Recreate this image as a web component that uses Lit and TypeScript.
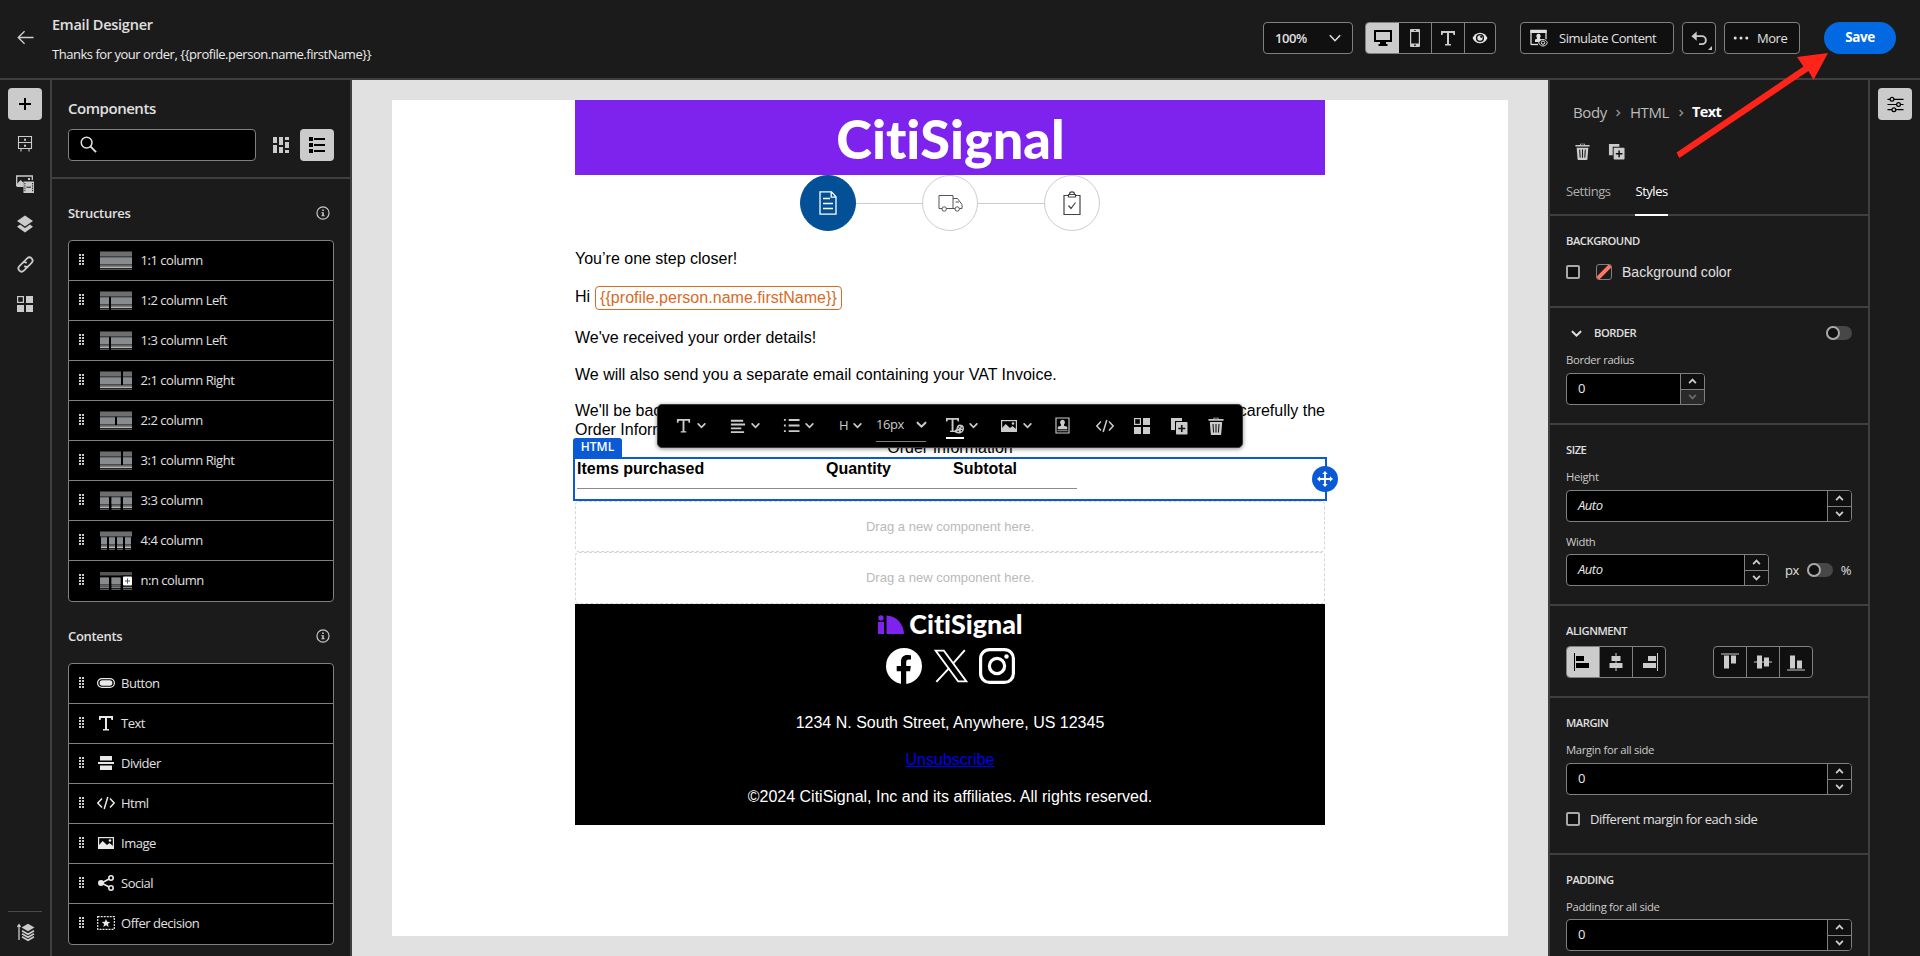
import { LitElement, html, css, svg, nothing } from "lit";
import { customElement, property } from "lit/decorators.js";
import { classMap } from "lit/directives/class-map.js";

/* ---------- icon set ---------- */
const ICONS: Record<string, any> = {
  back: svg`<path d="M17.5 9H1.5M8 2.3 1.3 9 8 15.7" fill="none" stroke="currentColor" stroke-width="1.4"/>`,
  plus: svg`<path d="M9 3v12M3 9h12" stroke="currentColor" stroke-width="2" fill="none"/>`,
  cabinet: svg`<path d="M2.5 1.500h13v12h-13zM2.500 7.500h13M5 13.500v3M13 13.500v3" fill="none" stroke="currentColor" stroke-width="1.100"/><path d="M8 3.800h2v2H8zM8 9.700h2v2H8z" fill="currentColor"/>`,
  media: svg`<path d="M.7 11V1h15.6v4" fill="none" stroke="currentColor" stroke-width="1.3"/><path d="M.7 12V9l4-4 3 3v4zM12 3h2v2h-2z" fill="currentColor"/><path d="M7.500 6.500h10.500v11.500H7.500z" fill="currentColor"/><path d="M8.900 8v9M16.600 8v9" stroke="#1b1b1b" stroke-width="1" stroke-dasharray="1.3 1"/><path d="M10.500 12.200h4.500" stroke="#1b1b1b" stroke-width="1"/>`,
  layers: svg`<path d="M9 .5 17 6l-8 5.5L1 6z" fill="currentColor"/><path d="M4 9.5 1 11.8 9 17.5l8-5.7-3-2.3-5 3.6z" fill="currentColor"/>`,
  link: svg`<g fill="none" stroke="currentColor" stroke-width="1.6" transform="rotate(-45 9 9)"><path d="M9.500 12H3.800a3 3 0 0 1 0-6h4a3 3 0 0 1 3 2.800"/><path d="M8.500 6h5.700a3 3 0 0 1 0 6h-4a3 3 0 0 1-3-2.800"/></g>`,
  blocks: svg`<rect x="1.600" y="1.600" width="5.800" height="5.800" fill="none" stroke="currentColor" stroke-width="1.200"/><path d="M10 1h7v7h-7zM1 10h7v7H1zM10 10h7v7h-7z" fill="currentColor"/>`,
  order: svg`<path d="M2 17V2M.4 3.8 2 1.6l1.600 2.200" fill="none" stroke="currentColor" stroke-width="1.300"/><path d="M11 .8 17.500 4.500 11 8.300 4.500 4.500z" fill="currentColor"/><path d="M5 7.700l6 3.500 6-3.500M5 10.700l6 3.500 6-3.500M5 13.700l6 3.500 6-3.500" fill="none" stroke="currentColor" stroke-width="1.700"/>`,
  search: svg`<circle cx="7" cy="7" r="5.700" fill="none" stroke="currentColor" stroke-width="1.600"/><path d="M11 11l6 6" stroke="currentColor" stroke-width="2"/>`,
  mosaic: svg`<path d="M1 1h4v6H1zM1 9h4v8H1zM7 1h4v8H7zM7 11h4v6H7zM13 1h4v3h-4zM13 6h4v6h-4zM13 14h4v3h-4z" fill="currentColor"/>`,
  listview: svg`<path d="M1 1h4v4H1zM1 7h4v4H1zM1 13h4v4H1zM6 2h11v2H6zM6 8h11v2H6zM6 14h11v2H6z" fill="currentColor"/>`,
  info: svg`<circle cx="9" cy="9" r="7.800" fill="none" stroke="currentColor" stroke-width="1.500"/><path d="M8 4.500h2v2H8zM7 8h3v4h1v1.300H7V12h1V9.300H7z" fill="currentColor"/>`,
  button: svg`<rect x=".6" y="4.600" width="16.800" height="8.800" rx="4.400" fill="none" stroke="currentColor" stroke-width="1.200"/><rect x="2.600" y="6.300" width="12.800" height="5.400" rx="2.700" fill="currentColor"/>`,
  text: svg`<path d="M2 2h14v4h-1.500l-.6-2H10v11h2v1.500H6V15h2V4H4.100l-.6 2H2z" fill="currentColor"/>`,
  divider: svg`<path d="M1 8h16v2H1zM3 2.500Q3 2 3.500 2h11q.5 0 .5.500V6.500H3zM3 11.500h12v4q0 .500-.5.500h-11q-.5 0-.5-.500z" fill="currentColor"/>`,
  code: svg`<path d="M5 4.500.8 9 5 13.500M13 4.500 17.200 9 13 13.500M10.800 3 7.200 15" fill="none" stroke="currentColor" stroke-width="1.500"/>`,
  image: svg`<rect x="1.600" y="3.600" width="14.800" height="10.800" fill="none" stroke="currentColor" stroke-width="1.200"/><path d="M2 14.500V11l3.700-4L10 11l2.500-2L16 12v2.500z" fill="currentColor"/><circle cx="13" cy="6.500" r="1.300" fill="currentColor"/>`,
  share: svg`<path d="M13 4.500 4.500 9l8.500 4.500" fill="none" stroke="currentColor" stroke-width="1.600"/><circle cx="4" cy="9" r="3" fill="currentColor"/><circle cx="14" cy="4" r="2.200" fill="#000" stroke="currentColor" stroke-width="1.600"/><circle cx="14" cy="14" r="2.200" fill="#000" stroke="currentColor" stroke-width="1.600"/>`,
  offer: svg`<rect x=".7" y="2.700" width="16.600" height="12.600" fill="none" stroke="currentColor" stroke-width="1.200" stroke-dasharray="2 1"/><path d="M9 5l1.200 2.800 3 .2-2.300 1.900.8 3L9 11.300l-2.700 1.600.8-3L4.800 8l3-.2z" fill="currentColor"/>`,
  chev: svg`<path d="M3.500 6.500 9 12l5.500-5.500" fill="none" stroke="currentColor" stroke-width="2.800" stroke-linecap="round"/>`,
  chevthin: svg`<path d="M3 6 9 12.500 15 6" fill="none" stroke="currentColor" stroke-width="2" stroke-linecap="round"/>`,
  chevup: svg`<path d="M3.500 11.500 9 6l5.500 5.500" fill="none" stroke="currentColor" stroke-width="3"/>`,
  chevdn: svg`<path d="M3.500 6.500 9 12l5.500-5.500" fill="none" stroke="currentColor" stroke-width="3"/>`,
  crumb: svg`<path d="M6.500 3.500 12 9l-5.500 5.500" fill="none" stroke="currentColor" stroke-width="2.600"/>`,
  desktop: svg`<path d="M0 1h18v12h-6v2h1.500v2h-9v-2H6v-2H0zM2 3v8h14V3z" fill="currentColor" fill-rule="evenodd"/>`,
  phone: svg`<path d="M5 0h8q1 0 1 1v16q0 1-1 1H5q-1 0-1-1V1q0-1 1-1zM5.200 3v11.500h7.600V3z" fill="currentColor" fill-rule="evenodd"/><path d="M8 1.200h2v.8H8zM8.200 15.600h1.600v1.400H8.200z" fill="#111"/>`,
  eye: svg`<path d="M9 3C5 3 2.200 5.500.6 9 2.200 12.500 5 15 9 15s6.800-2.500 8.400-6C15.800 5.500 13 3 9 3z" fill="currentColor"/><circle cx="9" cy="9" r="4.600" fill="#111"/><circle cx="9" cy="9" r="3" fill="currentColor"/><circle cx="10.300" cy="7.700" r="1.200" fill="#111"/>`,
  simulate: svg`<path d="M1 15.700V1.300h15v9" fill="none" stroke="currentColor" stroke-width="1.300"/><path d="M.4 1h16.200v3H.4z" fill="currentColor"/><path d="M1 15.500h7" stroke="currentColor" stroke-width="1.300"/><path d="M8.500 4.800a2.100 2.300 0 0 1 1.500 4v1l2 .8V13H5v-2.400l2-.8v-1a2.100 2.300 0 0 1 1.500-4z" fill="currentColor"/><path d="M13 10.500c-2 0-3.600 1.300-4.300 3.200.7 2 2.300 3.300 4.300 3.300s3.600-1.300 4.300-3.300c-.7-1.900-2.300-3.200-4.300-3.200z" fill="#111" stroke="currentColor"/><circle cx="13" cy="13.700" r="1.700" fill="none" stroke="currentColor"/>`,
  undo: svg`<path d="M2 6.500h9.500a4 4 0 0 1 0 8.500H8.500" fill="none" stroke="currentColor" stroke-width="2"/><path d="M6 1.500v10L.5 6.500z" fill="currentColor"/>`,
  dots: svg`<circle cx="2.500" cy="9" r="1.700" fill="currentColor"/><circle cx="9" cy="9" r="1.700" fill="currentColor"/><circle cx="15.500" cy="9" r="1.700" fill="currentColor"/>`,
  trash: svg`<path d="M6.500 2.500V.7h5v1.800M1.500 2h15v1.800h-15zM2.800 5h12.400l-1 12.200q0 .800-.8.800H4.600q-.8 0-.8-.800z" fill="currentColor"/><path d="M7.300 1.400h3.400v.8H7.300z" fill="#111"/><path d="M6 7l.6 8.500M9 7v8.500M12 7l-.6 8.500" stroke="#1b1b1b" stroke-width="1.100"/>`,
  dup: svg`<path d="M1 1h11v3H5v9H1z" fill="currentColor"/><rect x="6" y="5" width="11.500" height="12.500" rx=".8" fill="currentColor"/><path d="M11.750 8v7M8.300 11.500h7" stroke="#111" stroke-width="1.600"/>`,
  sliders: svg`<g fill="none" stroke="currentColor" stroke-width="1.300"><path d="M.5 3.500h2.800M7.300 3.500h10.200M.5 9h9.700M14.200 9h3.300M.5 14.500h4.800M9.300 14.500h8.200"/><circle cx="5.300" cy="3.500" r="2"/><circle cx="12.200" cy="9" r="2"/><circle cx="7.300" cy="14.500" r="2"/></g>`,
  alignleft: svg`<path d="M2 3h13v2H2zM2 7h15v2H2zM2 11h11v2H2zM2 15h14v2H2z" fill="currentColor"/>`,
  bullets: svg`<path d="M1 2h2v2H1zM1 8h2v2H1zM1 14h2v2H1zM6 2.200h11.500v2H6zM6 8h11.500v2H6zM6 14h11.500v2H6z" fill="currentColor"/>`,
  textcolor: svg`<path d="M0 1h13v3.500h-1.300L11 2.700H7.500v11h1.700V15H4v-1.300h1.600v-11H2L1.300 4.500H0z" fill="currentColor"/><path d="M13.500 7.500c3 0 4.500 1.500 4.500 4s-2 5-5 5-4.500-1-4.500-2.500 2-1 2-2.500 1-4 3-4z" fill="currentColor"/><path d="M13 9.200h1.300v1.300H13zM15.300 10.500h1.300v1.300h-1.300zM14.800 13h1.300v1.300h-1.300zM11.500 13.800h1.300v1.300h-1.300zM11.800 10.800h1v1h-1z" fill="#000"/>`,
  profile: svg`<path d="M1.500.5h15v17h-15zM2.700 1.700v14.600h12.600V1.700z" fill="currentColor" fill-rule="evenodd"/><path d="M9 3a2.600 2.800 0 0 1 1.600 5v1.200l3.400 1V13H4v-2.800l3.400-1V8A2.600 2.800 0 0 1 9 3z" fill="currentColor"/><path d="M3.500 14.200h11v.8h-11z" fill="currentColor"/>`,
  hl: svg`<path d="M.5 0v18" stroke="currentColor" stroke-width="1"/><path d="M2 3h8v5H2zM2 10h13v5H2z" fill="currentColor"/>`,
  hc: svg`<path d="M9 0v18" stroke="currentColor" stroke-width="1"/><path d="M4.500 3h9v5h-9zM2.500 10h13v5h-13z" fill="currentColor"/>`,
  hr: svg`<path d="M17.500 0v18" stroke="currentColor" stroke-width="1"/><path d="M8 3h8v5H8zM3 10h13v5H3z" fill="currentColor"/>`,
  vt: svg`<path d="M0 1h18" stroke="currentColor" stroke-width="1"/><path d="M3 2.500h5v13H3zM10 2.500h5v8h-5z" fill="currentColor"/>`,
  vm: svg`<path d="M0 9h18" stroke="currentColor" stroke-width="1"/><path d="M3 2.500h5v13H3zM10 4.500h5v9h-5z" fill="currentColor"/>`,
  vb: svg`<path d="M0 17h18" stroke="currentColor" stroke-width="1"/><path d="M3 2.500h5v13H3zM10 7.500h5v8h-5z" fill="currentColor"/>`,
  move: svg`<path d="M9 2v14M2 9h14" stroke="currentColor" stroke-width="2"/><path d="M9 0l3 3.500H6zM9 18l3-3.500H6zM0 9l3.500-3v6zM18 9l-3.500-3v6z" fill="currentColor"/>`,
};

@customElement("ui-icon")
class UiIcon extends LitElement {
  @property() name = "";
  @property({ type: Number }) size = 18;
  static styles = css`
    :host { display: inline-flex; flex: none; }
    svg { display: block; overflow: visible; }
  `;
  render() {
    return html`<svg width=${this.size} height=${this.size} viewBox="0 0 18 18">${ICONS[this.name] ?? nothing}</svg>`;
  }
}

const base = css`
  *, :host { box-sizing: border-box; }
  :host {
    font-family: "Open Sans", "Noto Sans", sans-serif;
    font-size: 13px;
    letter-spacing: -0.036em;
    color: #e0e0e0;
    white-space: nowrap;
  }
`;

/* ---------- top bar ---------- */
@customElement("top-bar")
class TopBar extends LitElement {
  static styles = [base, css`
    :host { display: flex; height: 80px; background: #1b1b1b; border-bottom: 2px solid #3f3f3f; padding: 0 24px 0 17px; }
    .back { align-self: center; margin-top: -3px; color: #cfcfcf; }
    .names { margin-left: 18px; flex: 1; }
    h1 { margin: 14px 0 0; font-size: 14.500px; line-height: 22px; font-weight: 600; letter-spacing: -0.240px; }
    p { margin: 8px 0 0; line-height: 20px; color: #ebebeb; letter-spacing: -0.470px; }
    .tools { display: flex; height: 32px; margin-top: 22px; }
    .box { display: flex; align-items: center; border: 1px solid #808080; border-radius: 4px; background: #101010; }
    .zoom { width: 90px; padding: 0 10px 0 11px; justify-content: space-between; font-weight: 600; }
    .views { margin-left: 12px; overflow: hidden; }
    .view { height: 100%; display: flex; align-items: center; justify-content: center; border-left: 1px solid #808080; color: #cbcbcb; }
    .view:first-child { border: 0; background: #cbcbcb; color: #000; }
    .v0 { width: 33px; } .v1 { width: 32px; border: 0; } .v2 { width: 33px; } .v3 { width: 31px; color: #e6e6e6; }
    .sim { width: 154px; margin-left: 24px; padding-left: 9px; gap: 11px; }
    .undo { width: 34px; margin-left: 8px; position: relative; padding-left: 8px; color: #cbcbcb; }
    .undo i { position: absolute; right: 3px; bottom: 3px; border: 2.500px solid #cbcbcb; border-top-color: transparent; border-left-color: transparent; }
    .more { width: 76px; margin-left: 8px; padding-left: 8px; gap: 8px; }
    .save { width: 72px; margin-left: 24px; border-radius: 16px; background: #0269e3; color: #fff; font-size: 13.500px; font-weight: 700; display: flex; align-items: center; justify-content: center; padding-bottom: 2px; }
  `];
  render() {
    return html`
      <ui-icon class="back" name="back" size="17"></ui-icon>
      <div class="names">
        <h1>Email Designer</h1>
        <p>Thanks for your order, {{profile.person.name.firstName}}</p>
      </div>
      <div class="tools">
        <div class="box zoom"><span>100%</span><ui-icon name="chevthin" size="14"></ui-icon></div>
        <div class="box views">
          ${["desktop", "phone", "text", "eye"].map((n, i) => html`<div class="view v${i}"><ui-icon name=${n} size=${i === 3 ? 16 : 18}></ui-icon></div>`)}
        </div>
        <div class="box sim"><ui-icon name="simulate"></ui-icon>Simulate Content</div>
        <div class="box undo"><ui-icon name="undo" size="17"></ui-icon><i></i></div>
        <div class="box more"><ui-icon name="dots" size="16"></ui-icon>More</div>
        <div class="save">Save</div>
      </div>`;
  }
}

/* ---------- left rail ---------- */
@customElement("left-rail")
class LeftRail extends LitElement {
  static styles = css`
    *, :host { box-sizing: border-box; }
    :host { width: 52px; border-right: 2px solid #3f3f3f; display: flex; flex-direction: column; align-items: center; padding-top: 8px; color: #cbcbcb; }
    .btn { width: 34px; height: 32px; margin-bottom: 8px; display: flex; align-items: center; justify-content: center; border-radius: 4px; flex: none; }
    .on { background: #cbcbcb; color: #000; }
    .foot { margin-top: auto; width: 34px; height: 45px; border-top: 1px solid #4a4a4a; display: flex; justify-content: center; padding: 11px 0 0 1px; }
  `;
  render() {
    return html`
      <div class="btn on"><ui-icon name="plus"></ui-icon></div>
      ${["cabinet", "media", "layers", "link", "blocks"].map((n) => html`<div class="btn"><ui-icon name=${n} size=${n === "link" ? 19 : 18}></ui-icon></div>`)}
      <div class="foot"><ui-icon name="order" size="18"></ui-icon></div>`;
  }
}

/* ---------- components panel ---------- */
type Col = [number, number];
const STRUCTURES: { label: string; cols: Col[]; full?: boolean; nn?: boolean }[] = [
  { label: "1:1 column", cols: [[0, 32]] },
  { label: "1:2 column Left", cols: [[0, 9], [11, 21]] },
  { label: "1:3 column Left", cols: [[0, 9], [11, 21]] },
  { label: "2:1 column Right", cols: [[0, 21], [23, 9]], full: true },
  { label: "2:2 column", cols: [[0, 15], [17, 15]], full: true },
  { label: "3:1 column Right", cols: [[0, 21], [23, 9]], full: true },
  { label: "3:3 column", cols: [[0, 9], [11.500, 9], [23, 9]] },
  { label: "4:4 column", cols: [[1, 6], [9, 6], [17, 6], [25, 6]] },
  { label: "n:n column", cols: [[0, 9], [11.500, 9], [23, 9]], nn: true },
];
const CONTENTS: [string, string][] = [
  ["button", "Button"], ["text", "Text"], ["divider", "Divider"], ["code", "Html"],
  ["image", "Image"], ["share", "Social"], ["offer", "Offer decision"],
];

@customElement("components-panel")
class ComponentsPanel extends LitElement {
  static styles = [base, css`
    :host { width: 300px; border-right: 2px solid #3f3f3f; overflow: hidden; display: flex; flex-direction: column; }
    .head { height: 99px; border-bottom: 2px solid #3f3f3f; padding: 17px 16px 0; flex: none; }
    h2 { margin: 0; font-size: 15px; line-height: 22px; font-weight: 600; }
    .row { display: flex; margin-top: 10px; align-items: center; }
    .search { width: 188px; height: 32px; border: 1px solid #808080; border-radius: 4px; background: #000; padding: 6px 0 0 11px; }
    .mosaic { margin-left: 16px; color: #cbcbcb; }
    .list { margin-left: 10px; width: 34px; height: 32px; border-radius: 4px; background: #cbcbcb; color: #000; display: flex; align-items: center; justify-content: center; }
    .sec { padding: 0 16px; }
    .title { display: flex; justify-content: space-between; align-items: center; padding-right: 4px; height: 20px; font-weight: 600; letter-spacing: -0.300px; }
    .title ui-icon { color: #cbcbcb; }
    .s1 { margin-top: 24px; } .s2 { margin-top: 24px; }
    .box { margin-top: 17px; border: 1px solid #808080; border-radius: 4px; background: #000; overflow: hidden; }
    .item { height: 40px; display: flex; align-items: center; padding: 0 0 1px 10px; border-bottom: 1px solid #808080; }
    .item:last-child { border: 0; padding-bottom: 2px; }
    .grip { width: 6px; height: 12px; flex: none; margin-top: -1px; }
    .thumb { margin: 0 8.500px 0 15px; flex: none; }
    .item ui-icon { margin: 0 6px 0 12px; color: #e8e8e8; }
  `];
  grip() {
    return html`<svg class="grip" viewBox="0 0 6 12">${[0, 3, 6, 9].map((y) => svg`<path d="M0 ${y}h2v2H0zM3 ${y}h2v2H3z" fill="#cbcbcb"/>`)}</svg>`;
  }
  thumb(s: (typeof STRUCTURES)[0]) {
    const top = s.nn ? 2 : 0;
    return html`<svg class="thumb" width="32" height="19" viewBox="0 0 32 19">
      ${s.nn
        ? svg`<path d="M0 1.500h32v1H0z" fill="#aaa"/><path d="M0 2.500h32v2H0z" fill="#555"/>`
        : svg`<path d="M0 .5h32v5H0z" fill="#6e6e6e"/>`}
      ${s.cols.map(([x, w]) => svg`<path d="M${x} ${5.500 + top / 2}h${w}v8.500h-${w}z" fill="#4a4c4d"/><path d="M${x} 6.500h${w}v6.500h-${w}z" fill="#888c8f"/>`)}
      ${(s.full ? [[0, 32] as Col] : s.cols).map(([x, w]) => svg`<path d="M${x} 14h${w}v1h-${w}z" fill="#666"/><path d="M${x} 15.500h${w}v1.200h-${w}z" fill=${s.nn ? "#aaa" : "#fff"}/><path d="M${x} 17.700h${w}v1h-${w}z" fill="#777"/>`)}
      ${s.label.endsWith("Right") ? svg`<path d="M21 0h2v13.500h-2z" fill="#000"/>` : nothing}
      ${s.nn ? svg`<path d="M21.500 4.500h10.500v11H21.500z" fill="#000"/><rect x="23" y="5.500" width="9" height="9" rx="1" fill="#fff"/><path d="M27.500 7.500v5M25 10h5" stroke="#555"/>` : nothing}
    </svg>`;
  }
  render() {
    return html`
      <div class="head">
        <h2>Components</h2>
        <div class="row">
          <div class="search"><ui-icon name="search" size="17"></ui-icon></div>
          <ui-icon class="mosaic" name="mosaic"></ui-icon>
          <div class="list"><ui-icon name="listview"></ui-icon></div>
        </div>
      </div>
      <div class="sec s1">
        <div class="title">Structures<ui-icon name="info" size="14"></ui-icon></div>
        <div class="box">${STRUCTURES.map((s) => html`<div class="item">${this.grip()}${this.thumb(s)}${s.label}</div>`)}</div>
      </div>
      <div class="sec s2">
        <div class="title">Contents<ui-icon name="info" size="14"></ui-icon></div>
        <div class="box">${CONTENTS.map(([i, l]) => html`<div class="item">${this.grip()}<ui-icon name=${i}></ui-icon>${l}</div>`)}</div>
      </div>`;
  }
}

/* ---------- floating text toolbar ---------- */
@customElement("text-toolbar")
class TextToolbar extends LitElement {
  static styles = [base, css`
    :host { display: flex; align-items: center; width: 586px; height: 44px; background: #000; border: 1px solid #3a3a3a; border-radius: 5px; box-shadow: 0 1px 4px rgba(0,0,0,.45); color: #cbcbcb; padding: 0 0 1px 17px; }
    .g { display: flex; align-items: center; gap: 4px; height: 41px; flex: none; }
    .a { width: 54px; } .h { width: 36px; gap: 4px; margin-left: 2px; }
    .size { width: 50px; height: 32px; padding-bottom: 1px; border-bottom: 1px solid #808080; justify-content: space-between; margin: 0 20px 0 1px; }
    .size ui-icon { margin-right: -2px; }
    .tc { display: flex; flex-direction: column; width: 18px; border-bottom: 2px solid #fff; padding-bottom: 2px; margin-top: 4px; }
    .p { width: 42px; } .q { width: 37px; } .r { width: 37px; }
  `];
  render() {
    const c = html`<ui-icon name="chev" size="11"></ui-icon>`;
    return html`
      <div class="g a"><ui-icon name="text" size="17"></ui-icon>${c}</div>
      <div class="g a"><ui-icon name="alignleft" size="17"></ui-icon>${c}</div>
      <div class="g a"><ui-icon name="bullets" size="17"></ui-icon>${c}</div>
      <div class="g h"><span>H</span>${c}</div>
      <div class="g size"><span>16px</span><ui-icon name="chev" size="13"></ui-icon></div>
      <div class="g a"><div class="tc"><ui-icon name="textcolor" size="18"></ui-icon></div>${c}</div>
      <div class="g a"><ui-icon name="image" size="18"></ui-icon>${c}</div>
      <div class="g p"><ui-icon name="profile" size="17"></ui-icon></div>
      <div class="g q"><ui-icon name="code"></ui-icon></div>
      <div class="g r"><ui-icon name="blocks"></ui-icon></div>
      <div class="g r"><ui-icon name="dup"></ui-icon></div>
      <ui-icon name="trash"></ui-icon>`;
  }
}

/* ---------- email canvas ---------- */
@customElement("email-canvas")
class EmailCanvas extends LitElement {
  static styles = css`
    *, :host { box-sizing: border-box; }
    :host { flex: 1; background: #e1e1e1; padding: 20px 40px; font: 16px/19px "Liberation Sans", Arial, sans-serif; color: #000; white-space: nowrap; }
    .page { height: 836px; background: #fff; display: flex; justify-content: center; }
    .mail { width: 750px; position: relative; }
    .banner { height: 75px; background: #7e22ee; color: #fff; text-align: center; }
    .logo { font-family: Lato, sans-serif; font-weight: 900; font-variant-ligatures: none; }
    .banner .logo { display: block; font-size: 54px; line-height: 77px; padding-left: 1px; }
    .steps { display: flex; justify-content: center; align-items: center; height: 56px; }
    .dot { width: 56px; height: 56px; border-radius: 50%; border: 1px solid #ccc; display: flex; align-items: center; justify-content: center; }
    .dot.on { background: #045096; border-color: #045096; }
    .bar { width: 66px; height: 1px; background: #ccc; }
    p { margin: 0; height: 19px; }
    .copy { padding-top: 18px; }
    .copy p + p { margin-top: 18px; }
    .chip { display: inline-block; height: 24px; line-height: 22px; border: 1px solid #d96a1f; border-radius: 4px; padding: 0 4px; color: #d96a1f; letter-spacing: 0.030px; }
    .copy .hi { height: 24px; line-height: 22px; display: flex; gap: 5px; }
    .copy .split { display: flex; justify-content: space-between; margin-top: 17px; }
    .copy .tight { margin-top: 0; }
    .copy .oi { text-align: center; height: 18px; line-height: 18px; margin-top: 0; }
    .sel { margin: 0 -2px; height: 44px; border: 2px solid #0a5ad6; padding: 2px; position: relative; font-weight: 700; }
    .cols { display: flex; line-height: 16px; }
    .c1 { width: 249px; } .c2 { width: 127px; }
    .rule { width: 500px; height: 1px; background: #8a8a8a; margin-top: 11px; }
    .tag { position: absolute; left: -2px; bottom: 42px; width: 49px; height: 19px; border-radius: 3px 3px 0 0; background: #0a5ad6; color: #fff; font: 600 12px/18px "Open Sans", sans-serif; text-align: center; }
    .grab { position: absolute; right: -13px; top: 7px; width: 26px; height: 26px; border-radius: 50%; background: #0a5ad6; color: #fff; display: flex; align-items: center; justify-content: center; }
    .drop { height: 51px; border: 1px dashed #d5d5d5; border-radius: 4px; color: #b9b9b9; font-size: 13px; text-align: center; line-height: 49px; letter-spacing: 0.020px; }
    .drop + .drop { height: 52px; }
    .foot { background: #000; color: #fff; height: 221px; padding-top: 4px; text-align: center; }
    .brand { display: flex; justify-content: center; align-items: center; gap: 5px; height: 33px; padding-left: 1px; }
    .brand .logo { font-size: 26.800px; line-height: 33px; }
    .soc { display: flex; justify-content: center; gap: 11.500px; height: 50px; align-items: center; padding-left: 1px; }
    .ft p { margin-top: 18px; }
    .ft p:first-child { margin-top: 22px; }
    a { color: #0000ee; text-decoration: underline; }
    text-toolbar { position: absolute; left: 82px; top: 304px; z-index: 2; }
  `;
  render() {
    return html`<div class="page"><div class="mail">
      <div class="banner"><span class="logo">CitiSignal</span></div>
      <div class="steps">
        <div class="dot on"><svg width="18" height="24" viewBox="0 0 18 24" fill="none" stroke="#fff" stroke-width="1.300"><path d="M1 .8h11.500l4.500 5v17.400H1zM12.200.8v5.300H17M4 7.500h7M4 12.500h10M4 17.500h10"/></svg></div>
        <div class="bar"></div>
        <div class="dot"><svg width="25" height="18" viewBox="0 0 25 18" fill="none" stroke="#555" stroke-width="1"><path d="M4 14.500H1V1.500h14v13H8.500M15 4.500h4.500l4.500 6v4h-2.500M15 14.500h2M17.500 8h3.500"/><circle cx="6.200" cy="15" r="2.200"/><circle cx="19.200" cy="15" r="2.200"/></svg></div>
        <div class="bar"></div>
        <div class="dot"><svg width="18" height="24" viewBox="0 0 18 24" fill="none" stroke="#444" stroke-width="1.200"><path d="M5 4.500H1v19h16v-19h-4M5.500 3.500h7v2.500h-7zM6.500 3.300a2.500 2.500 0 0 1 5 0M5.500 14.500l2.500 3 4.500-6"/></svg></div>
      </div>
      <div class="copy">
        <p>You’re one step closer!</p>
        <p class="hi"><span>Hi</span><span class="chip">{{profile.person.name.firstName}}</span></p>
        <p>We've received your order details!</p>
        <p>We will also send you a separate email containing your VAT Invoice.</p>
        <p class="split"><span>We'll be back</span><span>carefully the</span></p>
        <p class="tight">Order Information</p>
        <p class="oi">Order Information</p>
      </div>
      <div class="sel">
        <div class="tag">HTML</div>
        <div class="cols"><span class="c1">Items purchased</span><span class="c2">Quantity</span><span>Subtotal</span></div>
        <div class="rule"></div>
        <div class="grab"><ui-icon name="move" size="16"></ui-icon></div>
      </div>
      <div class="drop">Drag a new component here.</div>
      <div class="drop">Drag a new component here.</div>
      <div class="foot">
        <div class="brand"><svg width="26" height="19" viewBox="0 0 26 19" fill="#7e22ee"><circle cx="3" cy="3" r="2.700"/><path d="M0 7h6v12H0zM8.500.500C18 .500 26 9 26 19H8.500z"/></svg><span class="logo">CitiSignal</span></div>
        <div class="soc">
          <svg width="36" height="36" viewBox="0 0 36 36"><circle cx="18" cy="18" r="18" fill="#fff"/><path d="M15 36V23.200h-4.300V18H15v-4.500C15 9.300 17.500 7 21.300 7c1.800 0 3.700.300 3.700.300v4.200h-2.100c-2 0-2.700 1.300-2.700 2.600V18h4.600l-.7 5.200h-3.900V36z" fill="#000"/></svg>
          <svg width="34" height="34" viewBox="0 0 32 32"><path d="M1.500 1.500h7.800l21.200 29h-7.800z" fill="none" stroke="#fff" stroke-width="1.700"/><path d="M29 1 17.800 13.800M14 18.200 2.200 31" stroke="#fff" stroke-width="1.900"/></svg>
          <svg width="36" height="36" viewBox="0 0 36 36" fill="none" stroke="#fff" stroke-width="3.200"><rect x="1.600" y="1.600" width="32.800" height="32.800" rx="9"/><circle cx="18" cy="18" r="7.600"/><circle cx="27.500" cy="8.500" r="2.200" fill="#fff" stroke="none"/></svg>
        </div>
        <div class="ft">
          <p>1234 N. South Street, Anywhere, US 12345</p>
          <p><a>Unsubscribe</a></p>
          <p>©2024 CitiSignal, Inc and its affiliates. All rights reserved.</p>
        </div>
      </div>
      <text-toolbar></text-toolbar>
    </div></div>`;
  }
}

/* ---------- form controls ---------- */
@customElement("num-field")
class NumField extends LitElement {
  @property() value = "";
  @property({ type: Boolean }) floor = false;
  static styles = [base, css`
    :host { display: flex; height: 32px; border: 1px solid #808080; border-radius: 4px; background: #000; overflow: hidden; color: #ebebeb; }
    .val { flex: 1; padding-left: 11px; line-height: 29px; }
    .auto { font-style: italic; }
    .st { width: 24px; border-left: 1px solid #808080; display: flex; flex-direction: column; color: #cbcbcb; background: #101010; }
    .st div { flex: 1; display: flex; align-items: center; justify-content: center; }
    .st div + div { border-top: 1px solid #808080; }
    .st div.off { background: #2a2a2a; color: #6a6a6a; }
  `];
  render() {
    return html`<div class=${classMap({ val: true, auto: this.value === "Auto" })}>${this.value}</div>
      <div class="st"><div><ui-icon name="chevup" size="11"></ui-icon></div><div class=${classMap({ off: this.floor })}><ui-icon name="chevdn" size="11"></ui-icon></div></div>`;
  }
}

/* ---------- style inspector ---------- */
@customElement("style-panel")
class StylePanel extends LitElement {
  static styles = [base, css`
    :host { width: 322px; border: solid #3f3f3f; border-width: 0 2px; overflow: hidden; }
    .top { height: 136px; border-bottom: 2px solid #3f3f3f; }
    .crumbs { display: flex; align-items: center; gap: 5.500px; padding: 20px 0 0 23px; font-size: 15px; line-height: 24px; color: #bdbdbd; letter-spacing: -0.025em; }
    .crumbs ui-icon { color: #8e8e8e; margin: 1px 1px 0; }
    .crumbs b { color: #fff; font-size: 14.500px; letter-spacing: -0.045em; }
    .acts { display: flex; gap: 17px; margin: 19px 0 0 24px; color: #cbcbcb; }
    .tabs { display: flex; gap: 25px; margin: 21px 0 0 16px; color: #b0b0b0; }
    .tab { height: 35px; line-height: 20px; }
    .tab.on { color: #fff; border-bottom: 2px solid #fff; }
    .sec { border-bottom: 2px solid #3f3f3f; padding: 17px 16px 0; }
    h3 { margin: 0; font-size: 11.200px; line-height: 16px; font-weight: 600; }
    .sz h3, .al h3, .mg h3, .pd h3 { position: relative; line-height: 15px; height: 16px; }
    .bg { height: 92px; } .bd { height: 117px; } .sz { height: 181px; } .al { height: 92px; } .mg { height: 157px; } .pd { height: 103px; border: 0; }
    .chk { width: 14px; height: 14px; border: 2px solid #a8a8a8; border-radius: 2px; background: #101010; }
    .line { display: flex; align-items: center; }
    .sw { width: 16px; height: 16px; margin: 0 10px 0 16px; border: 1px solid #808080; border-radius: 3px; overflow: hidden; background: #1b1b1b; }
    .sw svg { display: block; }
    .bg .line { margin-top: 14px; font: 14.050px "Liberation Sans", sans-serif; letter-spacing: 0; height: 17px; }
    .bdh { height: 16px; }
    .bdh h3 { margin-left: 11px; flex: 1; }
    .bdh ui-icon { margin-left: 4px; }
    .tg { width: 26px; height: 14px; border-radius: 7px; background: #474747; }
    .tg::before { content: ""; display: block; width: 14px; height: 14px; border: 2px solid #a8a8a8; border-radius: 50%; background: #101010; box-sizing: border-box; }
    label { display: block; margin-top: 11px; font-size: 11.300px; line-height: 16px; color: #cbcbcb; letter-spacing: -0.030em; }
    num-field { margin-top: 5px; }
    .bd num-field { width: 139px; }
    .sz .wl { margin-top: 12px; }
    .sz .w { margin-top: 4px; } .sz .w num-field { width: 203px; margin: 0 16px 0 0; }
    .sz .tg { margin: 0 8px; }
    .seg { display: flex; width: 100px; height: 32px; border: 1px solid #808080; border-radius: 4px; background: #101010; color: #cbcbcb; overflow: hidden; }
    .seg div { flex: 1; display: flex; align-items: center; justify-content: center; }
    .seg div + div { border-left: 1px solid #808080; }
    .seg .on { background: #cbcbcb; color: #000; }
    .al .line { gap: 47px; margin-top: 7px; }
    .pd num-field { margin-top: 4px; }
    .mg .line { gap: 10px; margin-top: 14px; height: 20px; }
  `];
  render() {
    return html`
      <div class="top">
        <div class="crumbs"><span>Body</span><ui-icon name="crumb" size="10"></ui-icon><span>HTML</span><ui-icon name="crumb" size="10"></ui-icon><b>Text</b></div>
        <div class="acts"><ui-icon name="trash" size="17"></ui-icon><ui-icon name="dup" size="17"></ui-icon></div>
        <div class="tabs"><div class="tab">Settings</div><div class="tab on">Styles</div></div>
      </div>
      <div class="sec bg"><h3>BACKGROUND</h3>
        <div class="line"><div class="chk"></div><div class="sw"><svg width="14" height="14"><path d="M0 14 14 0" stroke="#ff7663" stroke-width="4"/></svg></div>Background color</div></div>
      <div class="sec bd"><div class="line bdh"><ui-icon name="chev" size="13"></ui-icon><h3>BORDER</h3><div class="tg"></div></div>
        <label>Border radius</label><num-field value="0" floor></num-field></div>
      <div class="sec sz"><h3>SIZE</h3>
        <label>Height</label><num-field value="Auto"></num-field>
        <label class="wl">Width</label><div class="line w"><num-field value="Auto"></num-field>px<div class="tg"></div>%</div></div>
      <div class="sec al"><h3>ALIGNMENT</h3><div class="line">
        <div class="seg">${["hl", "hc", "hr"].map((n, i) => html`<div class=${classMap({ on: i === 0 })}><ui-icon name=${n}></ui-icon></div>`)}</div>
        <div class="seg">${["vt", "vm", "vb"].map((n) => html`<div><ui-icon name=${n}></ui-icon></div>`)}</div></div></div>
      <div class="sec mg"><h3>MARGIN</h3><label>Margin for all side</label><num-field value="0"></num-field>
        <div class="line"><div class="chk"></div>Different margin for each side</div></div>
      <div class="sec pd"><h3>PADDING</h3><label>Padding for all side</label><num-field value="0"></num-field></div>`;
  }
}

@customElement("app-root")
class AppRoot extends LitElement {
  static styles = css`
    *, :host { box-sizing: border-box; }
    :host { display: block; width: 1920px; height: 956px; background: #1b1b1b; overflow: hidden; position: relative; }
    .body { display: flex; height: 876px; }
    left-rail, components-panel, style-panel { flex: none; }
    .right { width: 50px; padding-top: 8px; display: flex; justify-content: center; align-items: flex-start; }
    .right div { width: 34px; height: 32px; border-radius: 4px; background: #cbcbcb; color: #000; display: flex; align-items: center; justify-content: center; }
    .pointer { position: absolute; left: 1670px; top: 46px; z-index: 3; }
  `;
  render() {
    return html`
      <top-bar></top-bar>
      <div class="body">
        <left-rail></left-rail>
        <components-panel></components-panel>
        <email-canvas></email-canvas>
        <style-panel></style-panel>
        <div class="right"><div><ui-icon name="sliders" size="17"></ui-icon></div></div>
      </div>
      <svg class="pointer" width="164" height="116" viewBox="0 0 164 116"><path d="M158 7 127 11l6.500 9.500L6.500 106.500 9.300 112 138.500 25l5 9z" fill="#ff2419"/></svg>`;
  }
}
